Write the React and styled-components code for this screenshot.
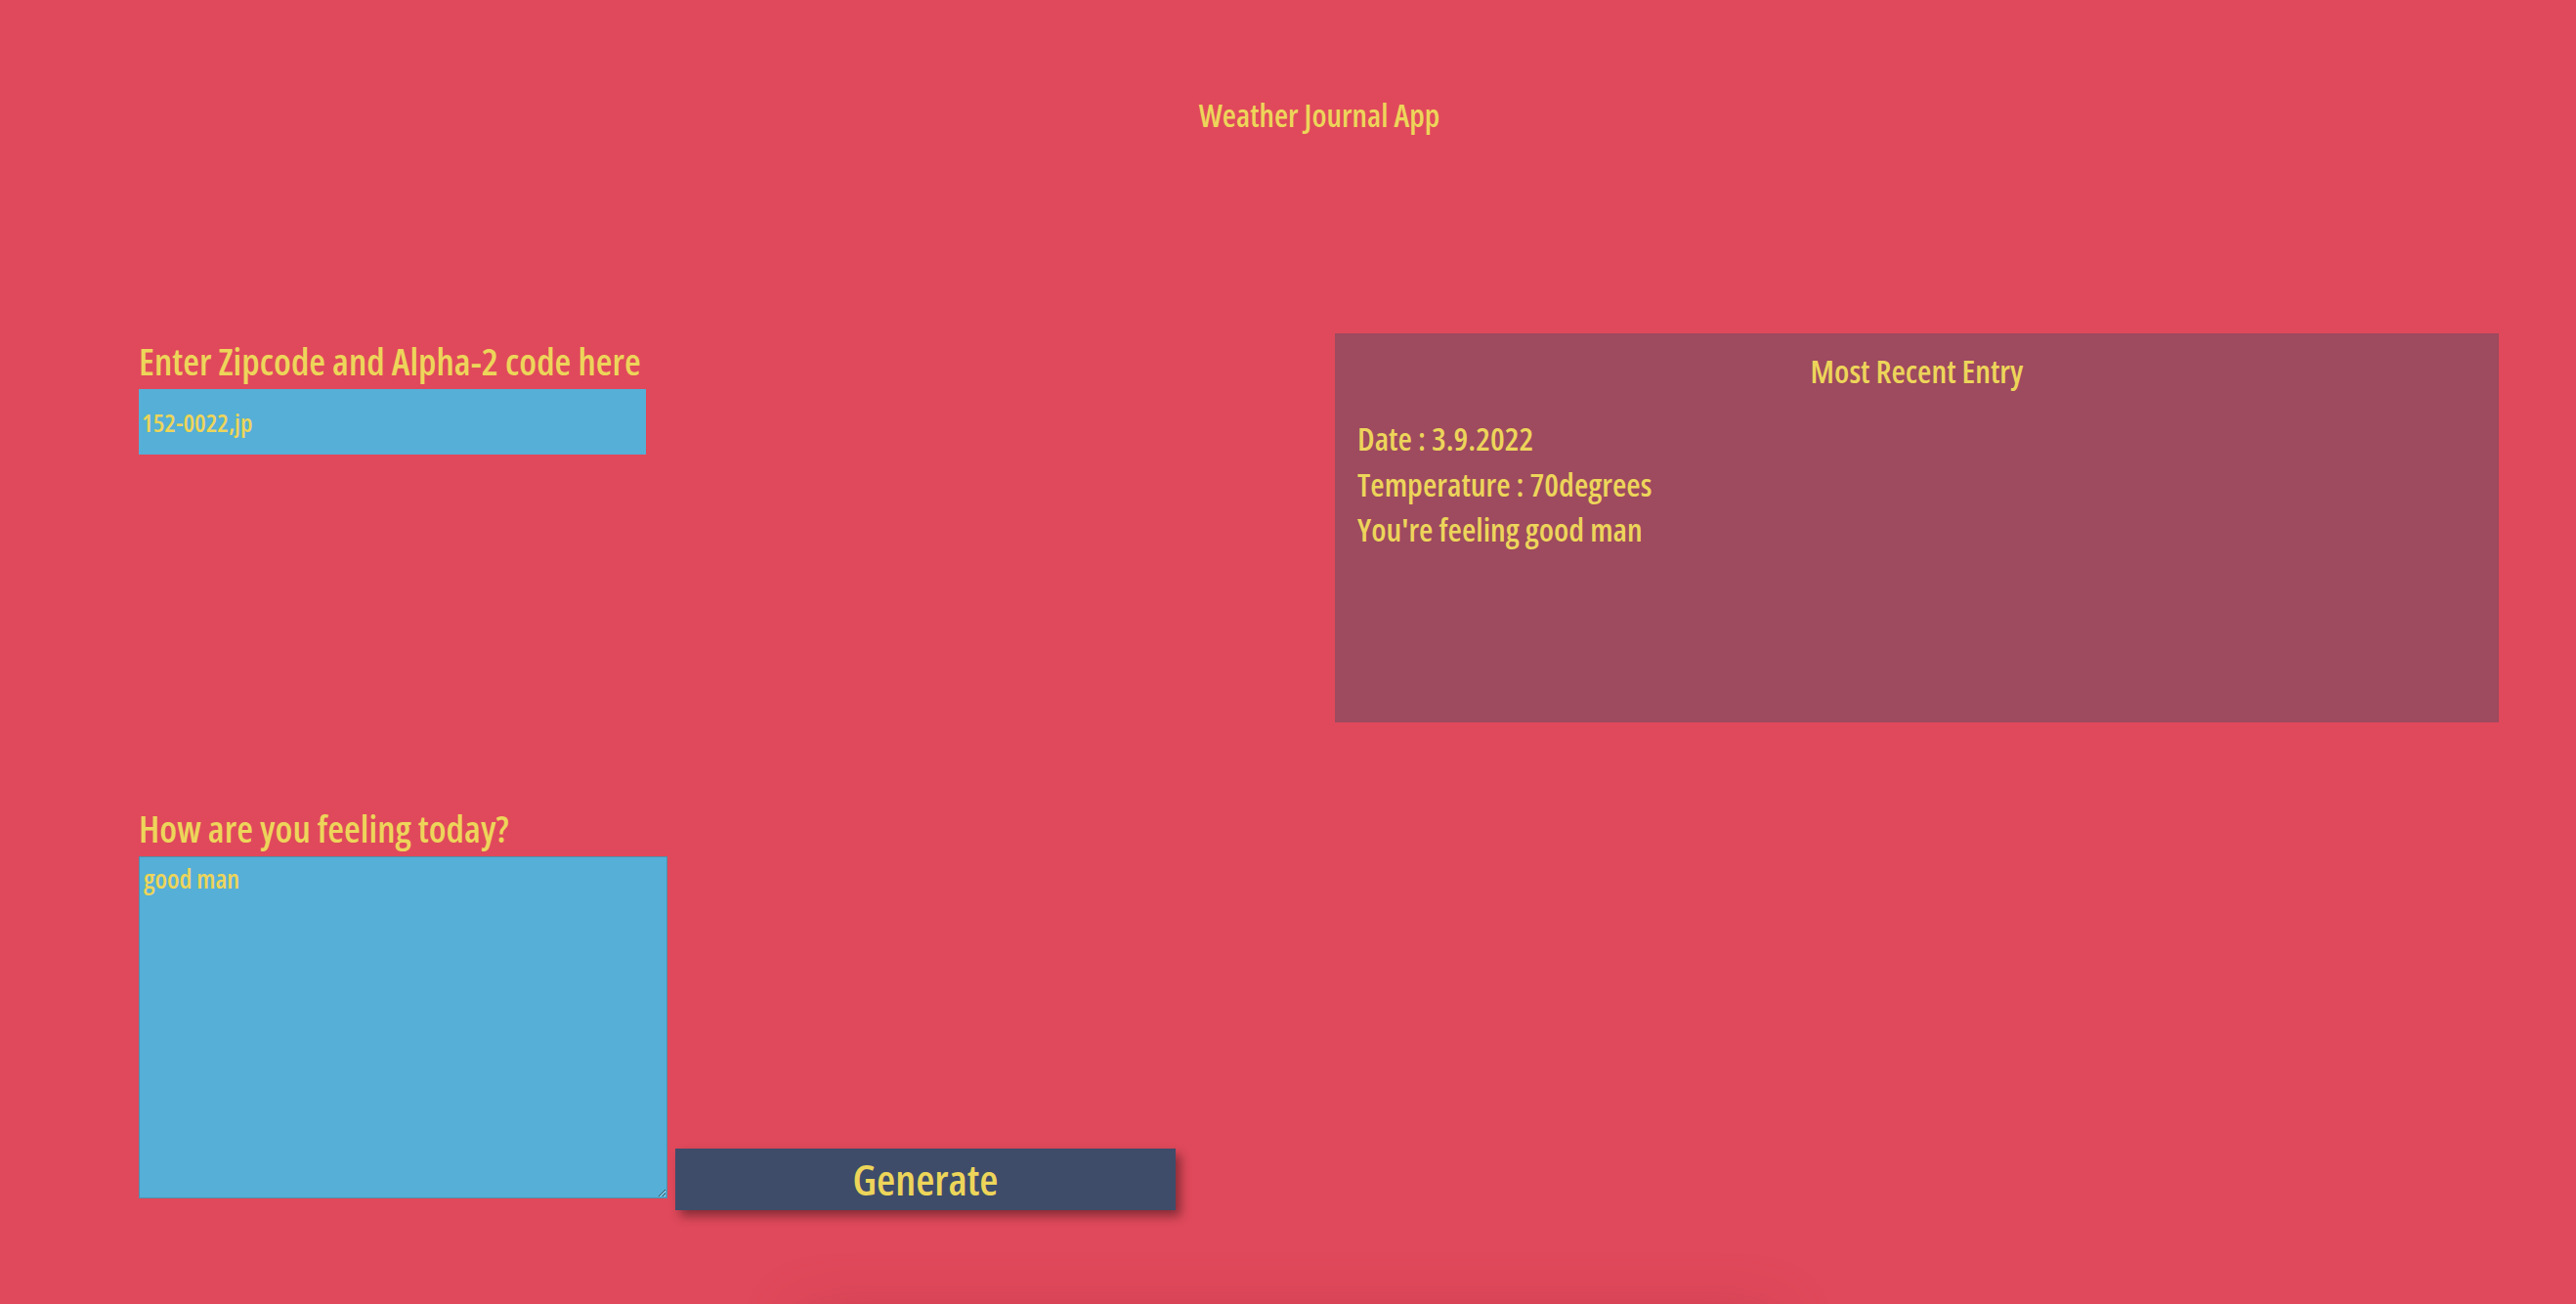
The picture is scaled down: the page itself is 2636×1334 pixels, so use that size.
import styled, { createGlobalStyle } from "styled-components";

const GlobalStyle = createGlobalStyle`
  body {
    margin: 0;
    background: #e0495b;
    color: #edd55a;
    font-family: "Open Sans", "Liberation Sans", sans-serif;
    font-stretch: condensed;
    font-weight: 600;
  }
`;

const Page = styled.div`
  height: 1334px;
  display: flex;
  flex-direction: column;
  overflow: hidden;
`;

const Header = styled.header`
  padding: 94px 0 0 64px;
  height: 341px;
  box-sizing: border-box;
  text-align: center;
  font-size: 32.5px;
  line-height: 48px;
`;

const Main = styled.main`
  display: grid;
  grid-template-columns: 1fr 1191px;
  padding: 0 79px 0 142px;
`;

const FormCol = styled.div`
  display: flex;
  flex-direction: column;
  align-items: flex-start;
`;

const Field = styled.div`
  display: flex;
  flex-direction: column;
  align-items: flex-start;
  margin-top: ${(p) => p.$top || 0}px;
`;

const Label = styled.label`
  font-size: 38.5px;
  line-height: 48px;
  margin-bottom: 5px;
`;

const ZipInput = styled.input`
  width: 519px;
  height: 67px;
  box-sizing: border-box;
  border: none;
  outline: none;
  padding: 0 3px;
  background: #55afd6;
  color: #edd55a;
  font-family: inherit;
  font-stretch: condensed;
  font-weight: 600;
  font-size: 26px;
`;

const EntryRow = styled.div`
  display: flex;
  align-items: flex-end;
  gap: 8px;
`;

const FeelingsArea = styled.textarea`
  width: 541px;
  height: 350px;
  box-sizing: border-box;
  margin: 0 0 12px;
  border: 1px solid #4f8fab;
  outline: none;
  padding: 4px 4px;
  background: #55afd6;
  color: #edd55a;
  font-family: inherit;
  font-stretch: condensed;
  font-weight: 600;
  font-size: 27px;
  line-height: 36px;
`;

const GenerateButton = styled.button`
  width: 512px;
  height: 63px;
  border: none;
  background: #3e4c6a;
  color: #edd55a;
  font-family: inherit;
  font-stretch: condensed;
  font-weight: 600;
  font-size: 44px;
  line-height: 63px;
  padding: 0;
  box-shadow: 5px 6px 10px rgba(0, 0, 0, 0.4);
  cursor: pointer;
`;

const EntryHolder = styled.section`
  height: 398px;
  box-sizing: border-box;
  padding: 15px 23px;
  background: #9e4a5f;
`;

const EntryTitle = styled.div`
  text-align: center;
  font-size: 33px;
  line-height: 48px;
  margin-bottom: 22px;
`;

const EntryLine = styled.div`
  font-size: 33px;
  line-height: 46.5px;
`;

const Footer = styled.div`
  margin: auto auto -70px;
  width: 1000px;
  height: 60px;
  flex-shrink: 0;
  box-shadow: 0 0 60px rgba(150, 30, 50, 0.25);
`;

export default function App() {
  return (
    <Page>
      <GlobalStyle />
      <Header>Weather Journal App</Header>
      <Main>
        <FormCol>
          <Field $top={4}>
            <Label htmlFor="zip">Enter Zipcode and Alpha-2 code here</Label>
            <ZipInput id="zip" defaultValue="152-0022,jp" />
          </Field>
          <Field $top={358}>
            <Label htmlFor="feelings">How are you feeling today?</Label>
            <EntryRow>
              <FeelingsArea id="feelings" defaultValue="good man" />
              <GenerateButton>Generate</GenerateButton>
            </EntryRow>
          </Field>
        </FormCol>
        <div>
          <EntryHolder>
            <EntryTitle>Most Recent Entry</EntryTitle>
            <EntryLine>Date : 3.9.2022</EntryLine>
            <EntryLine>Temperature : 70degrees</EntryLine>
            <EntryLine>You're feeling good man</EntryLine>
          </EntryHolder>
        </div>
      </Main>
      <Footer />
    </Page>
  );
}
